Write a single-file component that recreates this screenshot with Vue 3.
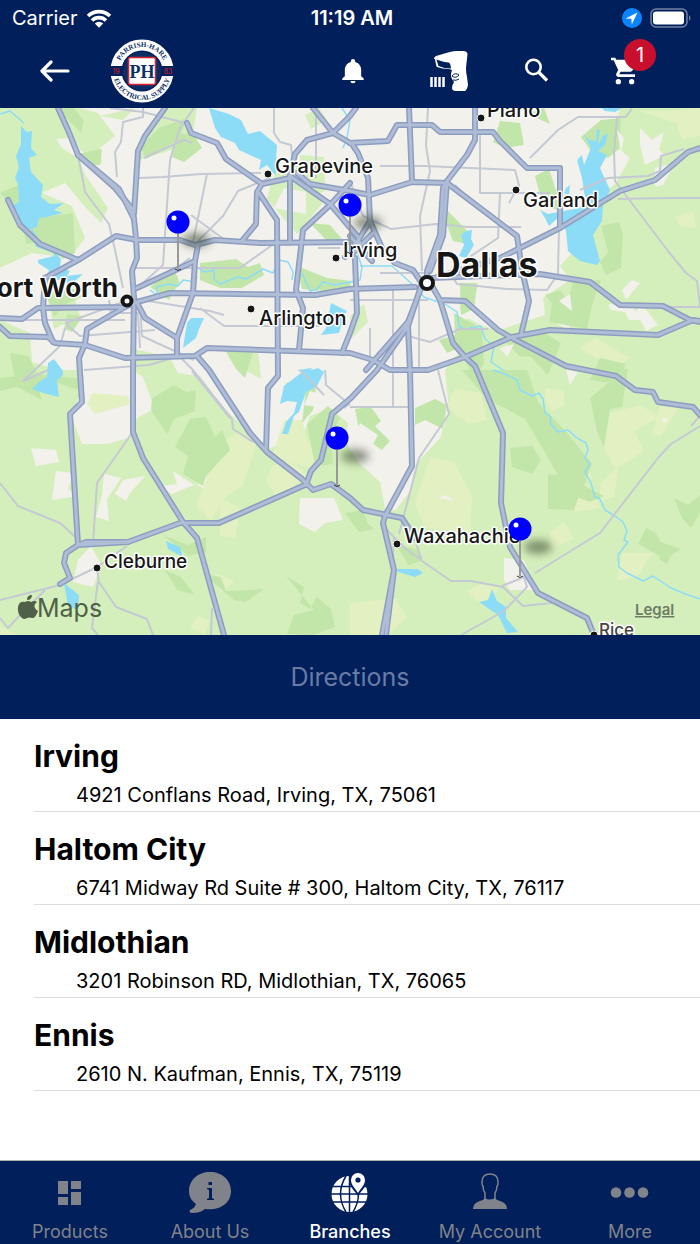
<template>
  <div class="app">
    <header class="header">
      <div class="status">
        <div class="status-side">
          <span>Carrier</span>
          <svg class="wifi" viewBox="0 0 26 19" aria-hidden="true">
            <path d="M2 7a16 16 0 0 1 22 0M6 11.500a10 10 0 0 1 14 0" fill="none" stroke="#fff" stroke-width="3.600" />
            <path d="M8.800 14.500a6 6 0 0 1 8.400 0L13 18.700z" fill="#fff" />
          </svg>
        </div>
        <strong class="time">11:19 AM</strong>
        <div class="status-side right">
          <svg class="location" viewBox="0 0 20 20" aria-hidden="true">
            <circle cx="10" cy="10" r="10" fill="#0a84ff" />
            <path d="M3.500 10.500 15.500 4.500 9.800 16.500 9.300 10.800z" fill="#fff" />
          </svg>
          <svg class="battery" viewBox="0 0 42 20" aria-hidden="true">
            <rect x="1" y="1" width="36" height="18" rx="5" fill="none" stroke="#7583a3" stroke-width="1.500" />
            <rect x="3" y="3.500" width="31" height="13" rx="3" fill="#fff" />
            <path d="M39 7q3 3 0 6z" fill="#7583a3" />
          </svg>
        </div>
      </div>
      <div class="toolbar">
        <button class="icon-button back" aria-label="Back">
          <svg viewBox="0 0 30 22">
            <path d="M28 11H2.500M11 2 2 11l9 9" fill="none" stroke="#fff" stroke-width="3.200" stroke-linecap="round" stroke-linejoin="round" />
          </svg>
        </button>
        <svg class="logo" viewBox="0 0 64 64" role="img" aria-label="Parrish-Hare Electrical Supply">
          <defs>
            <path id="logo-top" d="M8 32a24 24 0 0 1 48 0" />
            <path id="logo-bottom" d="M3 32a29 29 0 0 0 58 0" />
          </defs>
          <circle cx="32" cy="32" r="26" fill="none" stroke="#fff" stroke-width="11" />
          <path d="M0 27h13v10H0zM51 27h13v10H51z" fill="#001f5b" />
          <circle cx="32" cy="32" r="19" fill="#0b2f64" />
          <text class="logo-ring"><textPath href="#logo-top" startOffset="50%">PARRISH-HARE</textPath></text>
          <text class="logo-ring"><textPath href="#logo-bottom" startOffset="50%">ELECTRICAL SUPPLY</textPath></text>
          <text class="logo-year" x="6" y="35">19</text>
          <text class="logo-year" x="58" y="35">83</text>
          <rect x="18.500" y="18.500" width="27" height="27" rx="2" fill="#fff" stroke="#d9232e" stroke-width="1.500" />
          <text class="logo-initials" x="32" y="39">PH</text>
        </svg>
        <nav class="actions">
          <button class="icon-button" aria-label="Notifications">
            <svg viewBox="0 0 24 24" width="28" height="28">
              <path d="M12 22.500a2.200 2.200 0 0 0 2.200-2h-4.400a2.200 2.200 0 0 0 2.200 2zM19 16.500V11c0-3.500-2.200-6-5.200-6.800V3.500a1.800 1.800 0 0 0-3.600 0v.7C7.200 5 5 7.500 5 11v5.500l-2.200 2v1.200h18.400v-1.200z" fill="#fff" />
            </svg>
          </button>
          <button class="icon-button" aria-label="Scan">
            <svg viewBox="0 0 48 40" width="48" height="40">
              <path d="M13 8q0-2 2-3L27 1.500Q31 0 35 0h7q4 0 4.500 3L45 17q0 5 1 9l1 8q-1 5-3 6h-9q-4 0-4-3 0-3 2-6l-2-3q-2-4 0-9l-3-1q-7 0-12-2-1-1-2-8z" fill="#fff" />
              <path d="M15.500 8.500q8 3 12 3 2 0 2.500 6-7 0-12.500-2.500z" fill="#001f5b" />
              <path d="M31 25q3-4 7-1-3 4-7 1zM32 29q3 1 6-1" fill="none" stroke="#001f5b" />
              <path d="M10.500 26v10M14.500 26v10M18.500 26v10M22.500 26v10" stroke="#fff" stroke-width="2.500" />
            </svg>
          </button>
          <button class="icon-button" aria-label="Search">
            <svg viewBox="0 0 28 28" width="28" height="28">
              <circle cx="10.500" cy="10" r="7.200" fill="none" stroke="#fff" stroke-width="2.600" />
              <path d="m15.500 15 8.500 8.500" stroke="#fff" stroke-width="3.200" />
            </svg>
          </button>
          <button class="icon-button cart" aria-label="Cart, 1 item">
            <svg viewBox="0 0 24 24" width="32" height="32">
              <path d="M8.500 18a2 2 0 1 0 0 4 2 2 0 0 0 0-4zM3 2v2h2l3.400 7.200-1.300 2.500c-.7 1.300.2 2.800 1.700 2.800H21v-2H9.200l1-2h7.300c.8 0 1.400-.4 1.700-1L22.800 5a1 1 0 0 0-.9-1.500H7L6.200 2zm15.500 16a2 2 0 1 0 0 4 2 2 0 0 0 0-4z" fill="#fff" />
            </svg>
            <span class="badge">1</span>
          </button>
        </nav>
      </div>
    </header>

    <main class="content">
      <svg class="map" viewBox="0 0 700 527" role="img" aria-label="Map of branches around Dallas">
        <defs>
          <filter id="soft" x="-50%" y="-100%" width="200%" height="300%">
            <feGaussianBlur stdDeviation="4" />
          </filter>
        </defs>
        <rect width="700" height="527" fill="#d5efbc" />
        <path v-for="d in urban" :key="d" :d="d" fill="#f2f1ec" />
        <path v-for="d in meadows" :key="d" :d="d" fill="#d5efbc" />
        <path v-for="d in farmland" :key="d" :d="d" fill="#e2f0c2" />
        <path v-for="d in forest" :key="d" :d="d" fill="#c2e6a9" />
        <path v-for="d in clearings" :key="d" :d="d" fill="#f2f1ec" />
        <path v-for="d in lakes" :key="d" :d="d" fill="#8cdcf8" />
        <path v-for="d in rivers" :key="d" :d="d" class="river" />
        <path v-for="d in streets" :key="d" :d="d" class="street" />
        <path v-for="d in highways" :key="d" :d="d" class="highway-edge" />
        <path v-for="d in highways" :key="d" :d="d" class="highway" />

        <g v-for="city in cities" :key="city.name">
          <circle :cx="city.cx" :cy="city.cy" :r="city.ring ? city.ring : 4" :class="city.ring ? 'dot ring' : 'dot'" />
          <text :x="city.x" :y="city.y" :class="['city', city.size]">{{ city.name }}</text>
        </g>

        <g v-for="pin in pins" :key="pin.name">
          <ellipse :cx="pin.x + 18" :cy="pin.y + 18" rx="14" ry="7" fill="#26331f" opacity="0.5" filter="url(#soft)" />
          <path :d="`M${pin.x} ${pin.y + 10}v37`" stroke="#999" stroke-width="2" />
          <path :d="`M${pin.x - 3} ${pin.y + 47}q3 3 6 0`" fill="none" stroke="#333" />
          <circle :cx="pin.x" :cy="pin.y" r="11.500" fill="#00f" />
          <circle :cx="pin.x - 4" :cy="pin.y - 4" r="2.500" fill="#fff" />
        </g>

        <g class="maps-mark">
          <path d="M31 494q-3-2-6 0-6-1-7 5-1 7 4 11 2 2 5 0 3-1 5 0 3 1 6-7-5-3-3-7l2-2q-2-2-6 0zM27 492q0-5 5-5 0 5-5 5z" />
          <text x="37" y="509">Maps</text>
        </g>
        <a href="#legal"><text class="legal" x="635" y="507">Legal</text></a>
      </svg>

      <button class="directions" disabled>Directions</button>

      <ul class="branches">
        <li v-for="branch in branches" :key="branch.name" class="branch">
          <h2>{{ branch.name }}</h2>
          <p>{{ branch.address }}</p>
        </li>
      </ul>
    </main>

    <nav class="tabs">
      <a href="#products" class="tab">
        <svg viewBox="0 0 44 44">
          <path d="M10 10h10v13H10zM23 10h10v8H23zM10 26h10v8H10zM23 21h10v13H23z" />
        </svg>
        <span>Products</span>
      </a>
      <a href="#about" class="tab">
        <svg viewBox="0 0 44 44">
          <path d="M22 1C10 1 1 9 1 20c0 6 3 10 7 13-1 3-3 5-6 6-1 2 0 3 2 3 5 0 9-1 13-4 15 2 26-6 26-18C43 9 34 1 22 1z" />
          <path d="M20.500 11h3.500v3h-3.500zM19 17h5v10l2 1v1h-7v-1l2-1v-8l-2-1z" class="cutout" />
        </svg>
        <span>About Us</span>
      </a>
      <a href="#branches" class="tab active" aria-current="page">
        <svg viewBox="0 0 44 44">
          <circle cx="21.500" cy="23" r="18" />
          <g class="cutout-line">
            <path d="M5 15.500h33M3 23h37M5 31h33M21.500 5v37M18 5q-11 18 0 36M25 5q11 18 0 36" />
          </g>
          <path d="M30 25c-4-6-9-10-9-16 0-11 18-11 18 0 0 6-5 10-9 16z" class="cutout" />
          <path d="M30 22c-3-5-7-8-7-13a7 7 0 0 1 14 0c0 5-4 8-7 13z" />
          <circle cx="30" cy="9" r="2.600" class="cutout" />
        </svg>
        <span>Branches</span>
      </a>
      <a href="#account" class="tab">
        <svg viewBox="0 0 44 44">
          <path d="M17 28v-6q-2-3-2-7-1 0-1-4 0-8 8-8t8 8q0 4-1 4 0 4-2 7v6" fill="none" stroke="#808389" stroke-width="1.500" />
          <path d="M17 27q4 3 10 0 1 2 5 3 7 2 7 8H5q0-6 7-8 4-1 5-3z" />
        </svg>
        <span>My Account</span>
      </a>
      <a href="#more" class="tab">
        <svg viewBox="0 0 44 44">
          <circle cx="8" cy="21.500" r="5.300" />
          <circle cx="21.500" cy="21.500" r="5.300" />
          <circle cx="35" cy="21.500" r="5.300" />
        </svg>
        <span>More</span>
      </a>
    </nav>
  </div>
</template>

<script setup>
const branches = [
  { name: "Irving", address: "4921 Conflans Road, Irving, TX, 75061" },
  { name: "Haltom City", address: "6741 Midway Rd Suite # 300, Haltom City, TX, 76117" },
  { name: "Midlothian", address: "3201 Robinson RD, Midlothian, TX, 76065" },
  { name: "Ennis", address: "2610 N. Kaufman, Ennis, TX, 75119" },
];

const pins = [
  { name: "Haltom City", x: 178, y: 114 },
  { name: "Irving", x: 350, y: 97 },
  { name: "Midlothian", x: 337, y: 330 },
  { name: "Ennis", x: 520, y: 421 },
];

const cities = [
  { name: "Plano", cx: 481, cy: 10, x: 487, y: 9 },
  { name: "Grapevine", cx: 268, cy: 66, x: 275, y: 65 },
  { name: "Garland", cx: 516, cy: 82, x: 523, y: 99 },
  { name: "Irving", cx: 336, cy: 150, x: 343, y: 149 },
  { name: "Arlington", cx: 251, cy: 201, x: 259, y: 217 },
  { name: "Cleburne", cx: 97, cy: 460, x: 104, y: 460, size: "light" },
  { name: "Waxahachie", cx: 397, cy: 436, x: 404, y: 435 },
  { name: "Rice", cx: 594, cy: 527, x: 599, y: 528, size: "small" },
  { name: "Dallas", cx: 427, cy: 175, x: 436, y: 169, ring: 6, size: "large" },
  { name: "Fort Worth", cx: 127, cy: 193, x: 118, y: 189, ring: 4.5, size: "medium" },
];

// Map layers, in the viewBox units of the map
const urban = [
  "M80 0H620L612 35 630 50 616 75 600 88 602 112 560 158 570 172 543 190 545 207 517 216 500 222 482 218 468 210 458 220 462 240 445 262 449 303 440 330 416 356 410 383 396 402 385 400 380 374 360 356 346 335 348 315 330 300 310 308 303 328 270 340 250 330 240 315 223 300 200 268 178 265 170 250 140 262 155 300 137 310 128 330 107 336 82 336 72 310 80 285 78 262 58 262 32 254 30 225 0 212V160L32 145 70 150 85 130 72 98 42 85 65 75 86 100 101 115 108 100 86 68 78 50 62 40 56 31 74 30 80 42 102 56 100 40 115 28 98 5z",
  "M640 20l12 12 12-8-5 18 6 5-20 10-5-20zM655 60l20-5-12 22-8 2zM550 205l15 6 3-9 12-4-12 24-14-8zM622 182l10-10 8 3-14 17zM608 196l24 2 9 14-12 0-4-8-14-2zM641 195l17 22-12 6-5-10-8-4z",
  "M31 340l25 2 3 12-23 4zM56 363l18 2-6 16 10 7-26 4zM115 386l8-14 22-4-15 17-4 8zM173 363l21 14-22 9-13-8 18-2zM203 368l10-2-8 15-8-4zM104 366l17 4-14 21 2 22-13-4 6-22zM300 390l34 0 9 22-18 3-10 9-16-8zM78 452l13-14 10 18-8 23-20-5zM504 450l20 2 10 30-24 0-6-10z",
];

const meadows = [
  "M150 20l14-20 33 0-6 36-52 16zM300 47l24 2 1 34-22 9zM305 7l14-7 8 12-16 9zM100 8l35-8-12 12zM276 64l28-8 12 10 6 30-25 30-30-35 5-18z",
  "M50 200l25-8 5 15-26 14zM130 240l35 8-15 24-20-10zM230 240l28 3 3 28-27-15zM350 208l14-12 4 18-18 18zM460 175l18 0-4 24-14 4z",
];

const farmland = [
  "M210 340l28-15 18 12-13 40-20 14-12 22-15-16 11-27-20-8zM284 312l18 0 6 22 15 8-13 18-38-12zM272 358l16-6 20 14-30 26-12-20z",
  "M447 296l8-15 26 4 6 27-18 4-14-10zM430 350l24 4 18 34-2 36-45-4-10-25zM545 280l18 3 2 14-14 6-6-11zM535 320l48 25 10 27-22-4-16-22zM610 305l30-8 20 12-26 14 10 20-28 18-12-20zM570 390l24-8 6 18-25 4zM660 298l18 2-16 27-10 0zM550 425l14-12 10 18-24 10zM600 375l18-16-4 30-14 4zM622 445l30 0-15 24-20 4z",
  "M350 495l45-5 12 20-20 17h-37zM485 474l14 6-16 18-16-15zM215 465l20 8-15 12zM0 517l16 10H0zM640 3l25 0 35-3v28l-18 3-6-16zM675 109l18-6 3 17-16-2zM580 240l15-10 35 20-15 12z",
  "M92 285l36 3 2 8-35 10-8-10zM220 390l20 10-5 30-15-2zM198 508l12 5-6 14-14-8z",
];

const forest = [
  "M23 112l50-7 2 40-12 6-21-17-16 2zM0 85l27-12 8 20-14 13zM77 46l25-5-2 16-12 1zM139 40l20-20 28-10-9 22-31 18zM57 0l24 25 3-12-10-13zM180 25l14 2 8 13-18 14-12-5z",
  "M45 184l17-10 22 14-18 8-12 13zM67 206l16 2-11 16-8-3zM150 179l22-17 9 10-12 20zM200 155l36-4 12 8 12-4 4 12-22 13-22 0-20-8zM297 158l5 23 45 4 5-12-25-3zM225 242l28 2-8 26-9-9z",
  "M10 245l18 3 10 18 44 5 2 13-29-10-26 5-15-12zM0 270l35-4 7 26-25-13-17 4zM152 290l22-13 12 7 10-2-1 21-21 8-7 15-16-24zM190 311l16-2 9 20 7-7 8 20-24 26-3 10-20-12 5-18-13-9zM286 275l32-11-5 38-11 13 4-34-19-1z",
  "M307 316l21-18 12 12-9 19 2 27-18 2zM355 301l16-2 10 14-6 5 15 15-8 9-22-15zM415 300l20-9 12 6-4 24-18-9-10 5zM345 405l18-3 5 14 7 5-16 3zM396 436l23 6 3 11-14 4zM163 427l25 10 18-8 0 15-18 4zM165 462l16 7 14 18-18-5zM203 466l18 3 5 14 38-2-18 13-12-2zM286 468l18 11-4 16 10 6 7-12 14 12 4 18-22 8-26-1 7-19 20-5z",
  "M310 115l20 2 12 14-14 3zM438 94l16 15 14 15-1 12-14-3zM460 175l17 0-3 26-13 6zM454 205l28 16 2 35-10 14-15-30-12 5-8-13 16-5zM500 13l20 2 4 22-19 3-12-6zM530 5l14-5 6 16-11-5zM535 68l14-7 6 18 8 24-20-5zM581 29l20-17 20-2-2 31-11 9-17-7zM601 118l18-4 4 12-2 34-15 7-6-13 8-10z",
  "M545 187l15-5 8 10 5-18 28-2-9 25-5 24-38-7 3-18zM507 235l34-12 20 12-13 32-17-18-12-1zM600 250l26 6-10 20-26-4zM462 262l65 0 11 32 30 32 24 30-8 22 20 10-14 6-18-7-13-17-10-19-24-40-38-20zM510 340l22-2 9 14-9 14-20-7zM548 366l18 2 16 12-8 22-26-1zM590 290l18-15 5-14h15l-6 38-12 2-6 38-7-15zM674 390l14 7 12-10v18l-9 15-9-10zM646 420l10 5 5 9 20 7-15 10-28-15zM663 435l9 10-5 11-8-5z",
];

const clearings = [
  "M284 80l22 4 0 22-32-6zM260 95l12 4-6 14zM559 193l11-7 2 17zM500 240l14-4-7 13zM566 262l12 2-8 13zM310 283l12 4-4 12-14-2zM175 162l10 2-5 12zM617 22l7 8-3 14zM360 315l18 12-8 14-20-6zM438 390l8-3 8 6zM662 310l7 1-5 4z",
];

const lakes = [
  "M21 18l6 6 5-1-1 17 6 7-8 3 2 14 12 13-2 12 9 7 14-1-10 7 9 3-16 4-8 1-2 9-15 4-5-20-9-3 11-6-1-18-3-6 4-11-3-11 5-12z",
  "M38 152l16-4-1-5 8 8-1 8 10 4-3 5 16-2-15 13-3-8-20 2 4-11-11-7z",
  "M209 0l20 6 12 6 7 14 12-3 17 14-1 15 5 1-6 14-8-10-8 5 2-10-22-10-4-7-14-6-6-9z",
  "M191 210l13 0-5 11-3 9-13 10 4-25zM331 195l16 8-4 8-4 14-18 2 5-7zM301 265l17-5 6 4-7 14-11 6-7 20-5 4-6 18-6 0 4-12 8-9 3-11-10-1-7 3 4-18zM48 255l6-4 9 12 0 4-6 5 2 17-16-4-11-4 7-7 8-5z",
  "M583 25L589 32 596 33 597 21 600 22 598 37 603 28 608 25 605 37 598 43 607 47 600 60 610 82 603 97 602 113 593 127 600 153 597 157 580 153 568 143 566 123 560 108 549 118 545 110 540 102 548 106 563 103 580 100 585 90 582 70 577 52 582 47 584 57 591 40z",
  "M566 80l4-3-1 10-5-2zM466 123l6-1-1 9 3 6-8 13-7-2 5-11-3-10zM602 0h20l-7 4-10-1z",
  "M166 433l14 6 3 10-15-8zM64 475l15 12-1 15-10-4zM397 461l21 0 5 4-8 4-17-5zM492 481l5 12 9 6 0 11 12 14-11 1-9-18-19-13 9-2zM298 262l14-2-5 10z",
];

const rivers = [
  "M0 6l10-3 14 12M32 115l0 8 4 5 0 10 20 7 3 10M150 182l7 5 0-8 12-3 9 2 5-6 12 2 2-6M198 160l7 4 9-2 0 9 6 5 18-7 8 2 17-10 10 4 6-13 9 2 5 10-1 8M302 165l8 18 6-1 7-8 12 3 25-5 2-13-4-12 14-11M360 158l32 0 20 18 12 13 14 5M445 196l12 8 2 14 6 3 16-3 4 13 9 7-3 16 12 8",
  "M493 262L505 266 517 272 520 282 532 288 539 285 543 291 545 305 551 309 550 315 558 324 568 322 577 330 586 335 588 342 585 350 590 356 585 364 591 375 595 389 600 391 605 402 615 408 623 414 627 423 624 432 628 434 618 447 619 459 627 465 643 473 653 468 671 480 683 485 700 491",
  "M342 0l8 12-3 18-4 10",
];

const streets = [
  "M78 47l7 37 24 32 6 26 8 38M110 0l33 4 46 12M143 0v9l-20 5-2 20-6 10 2 25M194 0l-14 20-10 32-4 60-3 45-28 25M139 70l24-1 38-3 60-1M207 66l-14 68M225 132l-34-25M270 70l-32 13-15 25-25 25",
  "M135 160h105l35-25M170 165l20-15M130 190l80 13 14 4M140 240l-2-35-27 0-2-13M66 215l62-23M0 212h125M65 215l15 13 75-6M48 262l-25 11 37-35 5-18M84 262l65-5 30-9 14 14 39 49 1 10 20 13M140 195l2 33 52 24M200 200l24 18h96",
  "M144 50l40-18 8 3M313 0h3v70M274 0v25l6 9 11 3 2 20M340 140h-22M350 73l13 35 28 13 45-5 32 3 53 0M428 0l-2 38 4 25-10 45 2 55 M380 58h45l90 4 4 15-10 18M480 25v60h70M455 77l20 20M350 180h69v82M380 165h50M500 85l-2 45-45 30M530 50l28-28 20-13h48l6-9",
  "M617 10l-3 33 1 30 53 70 18 22 11 8 3 25M580 82l28-12 40-2 12-5 1-15 23-7M700 90h-30l-52 1M559 118l-1 48-11 16-40-1-50-5-8-13M640 199h60M350 192h78M393 182v117M350 299h58M438 262l11 44-30 44-20 76M370 220v42M408 228l22 6 30-13 28 0",
  "M132 325l-35 50-4 60M0 375l18 23 42 17 20 18M0 492l60-15 37-18 30-21M97 460l2 14 17 25 31 12 6 16M98 473l-6 47 6 7M45 482l-23 23-14 15-8-10M212 500l-1 27M325 262l1 15 24 20M300 262l24 25M344 300l6-5M192 263l38 47M387 422l20 20 15 10M415 432l7 21 29 20 20 0 32 6 20 19 29-3M502 478l22-9 3 10-23 24-43 24M535 465l65-40 58-75 13-14 29-18M394 430l-6 97M691 318l9-10",
];

const highways = [
  "M58 0l10 22 10 25 37 33 18 22 3 28 1 20-5 13 2 27-1 72 0 62 10 26 40 64 14 16 27 97",
  "M165 0l-20 28-7 15-4 62M78 47l41 34 15 30M187 15l4 10 26 10 9 16 36 25 28-6",
  "M290 68l5-22 12-14 26-7 17-17 6-8M313 0l20 25 19 11 6 9 10 25 2 43-11 18-14 18",
  "M290 68l40 28 28 33 2 8M297 65l13 11 40 7 20 4 42-13 35 1 70 53 5 34 7 31-8 34",
  "M262 76l-5 8-1 32-14 17M259 85l18 27 1 156-10 12-2 62M290 68v64M350 75l-20 22-27 25-7 60 7 18-4 42",
  "M45 170l35-19 36-23 21 4 43 0 15 5 20-5 45 3 90-1M8 92l12 25 20 19 38 16",
  "M0 210l22 1 16-11 87-1 12-5 33-9 145 2 35-6 65-2M0 219l10 9 38 1 7 6 30 2 40 13 70-2 12-8 143 5 23 7 17 10h38l37-13 47-20 38-7 108 5 35-15 7 1",
  "M45 170l-2 30 2 15 8 19M125 199l-38 22-2 15-6 14 3 44-12 12 8 131-12 8-2 10 6 15-10 6M78 437l50-3 52-19h39l86-38",
  "M78 437l8-3 42 0M137 180l58-27 3-16M195 153l-2 32-16 45v18M137 195l8 15 32 20M197 248l12 14 41 63 17 19 35 27 11 11 18-6 19 14 13 12 39 8 13 20",
  "M306 377l5-14 10-11 11-46 19-16 26-28 31-44 14-43M366 262l42-48 14-36M408 218l2 44 2 96-27 50-2 7 11 47-12 65M394 462l-8 65",
  "M355 150l2 55-7 20-8 20M370 113l12 27 13 15 18 7 8 12M350 128l22 25M373 125l-22 22",
  "M475 0v32l-8 15-20 26-4 7-3 47-13 36v12M447 73l-4 55-13 35M409 0l3 73M350 35l38-2 9-16h35l8 7h53l7 9 27 27h33v58",
  "M427 172l73-22 20-10 40-20 60-37 35-11 33-28 12-4M430 170l110-4 50 8 30 23 43 1 27 14 10 2",
  "M432 178l8 14 13 43 12 14 10 9 28 67-2 70 9 44 28 46 49 25 7 17M440 192l25 1 33 29 14 8 54 28 50 10 19 14 18 2 5 10 35 5 7 8",
];
</script>

<style>
body {
  margin: 0;
  background: #fff;
}
</style>

<style scoped>
.app {
  display: flex;
  flex-direction: column;
  min-height: 100vh;
  font-family: Inter, "Liberation Sans", sans-serif;
  color: #000;
}
.header {
  background: #001f5b;
  color: #fff;
}
.status {
  display: grid;
  grid-template-columns: 1fr auto 1fr;
  align-items: center;
  height: 36px;
  padding: 0 8px 0 12px;
  font-size: 20px;
}
.status-side {
  display: flex;
  align-items: center;
  gap: 8px;
}
.status-side.right {
  justify-content: flex-end;
}
.time {
  font-weight: 600;
}
.wifi {
  width: 26px;
  height: 19px;
}
.location {
  width: 20px;
  height: 20px;
}
.battery {
  width: 42px;
  height: 20px;
}
.toolbar {
  display: flex;
  align-items: center;
  height: 70px;
  padding: 0 59px 2px 40px;
}
.icon-button {
  display: flex;
  padding: 0;
  border: 0;
  background: none;
  cursor: pointer;
}
.back svg {
  width: 30px;
  height: 22px;
}
.logo {
  width: 64px;
  height: 64px;
  margin-left: 40px;
}
.logo-ring {
  font-family: "Liberation Serif", serif;
  font-size: 7px;
  font-weight: 700;
  text-anchor: middle;
  fill: #0b2f64;
}
.logo-year {
  font-size: 7px;
  text-anchor: middle;
  fill: #d9232e;
}
.logo-initials {
  font-family: "Liberation Sans Narrow", "Liberation Serif", serif;
  font-size: 18px;
  font-weight: 700;
  text-anchor: middle;
  fill: #0b2f64;
}
.actions {
  display: flex;
  align-items: center;
  gap: 54px;
  margin-left: auto;
}
.cart {
  position: relative;
  padding: 0 2px;
}
.badge {
  position: absolute;
  top: -16px;
  right: -15px;
  width: 32px;
  height: 32px;
  border-radius: 50%;
  background: #c8102e;
  color: #fff;
  font: 20px/32px Inter, sans-serif;
  text-align: center;
}
.content {
  flex: 1;
}
.map {
  display: block;
  width: 100%;
}
.river,
.street,
.highway,
.highway-edge {
  fill: none;
  stroke-linejoin: round;
}
.river {
  stroke: #8cdcf8;
  stroke-width: 1.5px;
}
.street {
  stroke: #c4c9d4;
  stroke-width: 2px;
}
.highway-edge {
  stroke: #8d9dc0;
  stroke-width: 6px;
  stroke-linecap: round;
}
.highway {
  stroke: #b0bdd7;
  stroke-width: 3px;
  stroke-linecap: round;
}
.dot {
  fill: #161616;
  stroke: #fff;
  stroke-width: 1px;
}
.dot.ring {
  fill: #fff;
  stroke: #161616;
  stroke-width: 4px;
}
.city {
  font-size: 20px;
  font-weight: 500;
  fill: #161616;
  stroke: #fff;
  stroke-width: 3px;
  stroke-linejoin: round;
  paint-order: stroke;
}
.city.light {
  font-size: 19px;
}
.city.small {
  font-size: 17px;
  fill: #444;
}
.city.medium {
  font-size: 26px;
  font-weight: 700;
  text-anchor: end;
}
.city.large {
  font-size: 34px;
  font-weight: 700;
}
.maps-mark {
  fill: #4f5f48;
  font-size: 25px;
}
.legal {
  font-size: 15px;
  font-weight: 600;
  fill: #6d7b65;
  text-decoration: underline;
}
.directions {
  display: block;
  width: 100%;
  height: 84px;
  border: 0;
  background: #001f5b;
  color: #6a7ba3;
  font: 25px/30px Inter, sans-serif;
}
.branches {
  margin: 0;
  padding: 0 0 0 34px;
  list-style: none;
}
.branch {
  padding: 18px 0 2px;
  border-bottom: 1px solid #dcdcdc;
}
.branch h2 {
  margin: 0;
  font-size: 30px;
  font-weight: 700;
  line-height: 38px;
}
.branch p {
  margin: 0;
  padding: 6px 0 0 42px;
  font-size: 20px;
  line-height: 28px;
}
.tabs {
  display: grid;
  grid-template-columns: repeat(5, 1fr);
  height: 83px;
  border-top: 1px solid #a8b5ab;
  background: #001f5b;
}
.tab {
  display: flex;
  flex-direction: column;
  align-items: center;
  gap: 5px;
  padding-top: 10px;
  color: #808389;
  fill: #808389;
  font-size: 18px;
  line-height: 24px;
  text-decoration: none;
}
.tab svg {
  width: 44px;
  height: 44px;
}
.tab.active {
  color: #fff;
  fill: #fff;
  font-weight: 500;
}
.cutout {
  fill: #001f5b;
}
.cutout-line {
  fill: none;
  stroke: #001f5b;
  stroke-width: 1.5px;
}
</style>
